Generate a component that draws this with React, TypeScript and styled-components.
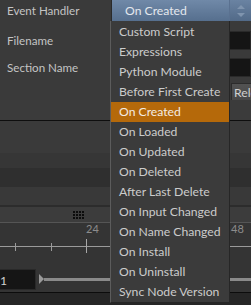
import React from 'react';
import styled, { createGlobalStyle } from 'styled-components';

const events = [
  'Custom Script',
  'Expressions',
  'Python Module',
  'Before First Create',
  'On Created',
  'On Loaded',
  'On Updated',
  'On Deleted',
  'After Last Delete',
  'On Input Changed',
  'On Name Changed',
  'On Install',
  'On Uninstall',
  'Sync Node Version',
];

const selected = 'On Created';

function App() {
  return (
    <StyledPage>
      <GlobalStyle />

      <StyledParms>
        <StyledParmRow>
          <StyledLabel>Event Handler</StyledLabel>
          <StyledCombo>
            <span>{selected}</span>
            <StyledSpinner>
              <svg width="8" height="12" viewBox="0 0 8 12">
                <path d="M4 0 L8 4 L0 4 Z" fill="#7f94ae" />
                <path d="M0 8 L8 8 L4 12 Z" fill="#7f94ae" />
              </svg>
            </StyledSpinner>
          </StyledCombo>
        </StyledParmRow>

        <StyledParmRow $top={10}>
          <StyledLabel>Filename</StyledLabel>
          <StyledField />
        </StyledParmRow>

        <StyledParmRow $top={8}>
          <StyledLabel>Section Name</StyledLabel>
          <StyledField />
        </StyledParmRow>

        <StyledButtonRow>
          <StyledButton>Reload</StyledButton>
        </StyledButtonRow>
      </StyledParms>

      <StyledBand $height={20} $bg="#3b3b3b" />
      <StyledBand $height={1} $bg="#0e0e0e" />
      <StyledBand $height={32} $bg="#3a3a3a" />
      <StyledBand $height={15} $bg="#363636" />
      <StyledBand $height={19} $bg="#2f2f2f" />
      <StyledBand $height={18} $bg="#393939" />
      <StyledBand $height={2} $bg="#2c2c2c" />

      <StyledGripBar>
        <svg width="11" height="8" viewBox="0 0 11 8">
          {[0, 3, 6].map((y) =>
            [0, 3, 6, 9].map((x) => <rect key={`${x}-${y}`} x={x} y={y} width="2" height="2" fill="#0c0c0c" />)
          )}
        </svg>
      </StyledGripBar>

      <StyledTimeline>
        <svg width="251" height="39" viewBox="0 0 251 39">
          <text x="86" y="10" fill="#8c8c8c" fontSize="11" fontFamily="Lato, sans-serif">24</text>
          <text x="231" y="10" fill="#8c8c8c" fontSize="11" fontFamily="Lato, sans-serif">48</text>
          <rect x="0" y="23" width="251" height="1" fill="#9a9a9a" />
          <rect x="15" y="20" width="1" height="8" fill="#9a9a9a" />
          <rect x="51" y="20" width="1" height="8" fill="#9a9a9a" />
          <rect x="86" y="16" width="1" height="14" fill="#a8a8a8" />
        </svg>
      </StyledTimeline>

      <StyledSliderRow>
        <StyledFrameField>1</StyledFrameField>
        <StyledHandle />
        <StyledTrack />
      </StyledSliderRow>

      <StyledBand $height={1} $bg="#0c0c0c" />
      <StyledBottom />

      <StyledMenu>
        {events.map((item) => (
          <StyledMenuItem key={item} $active={item === selected}>
            {item}
          </StyledMenuItem>
        ))}
      </StyledMenu>
    </StyledPage>
  );
}

const GlobalStyle = createGlobalStyle`
  html, body {
    margin: 0;
    padding: 0;
    background: #3a3a3a;
  }
`;

const StyledPage = styled.div`
  position: relative;
  width: 251px;
  height: 305px;
  overflow: hidden;
  background: #3a3a3a;
  font-family: Lato, 'Noto Sans', sans-serif;
  font-size: 12.2px;
  color: #cacaca;
  display: flex;
  flex-direction: column;
`;

const StyledParms = styled.div`
  display: flex;
  flex-direction: column;
  height: 100px;
`;

const StyledParmRow = styled.div<{ $top?: number }>`
  display: flex;
  align-items: center;
  margin-top: ${(p) => p.$top ?? 0}px;
`;

const StyledLabel = styled.div`
  width: 111px;
  flex-shrink: 0;
  padding-left: 7px;
  box-sizing: border-box;
  white-space: nowrap;
  font-size: 11.6px;
  color: #c4c4c4;
`;

const StyledCombo = styled.div`
  flex: 1;
  height: 21px;
  display: flex;
  align-items: center;
  background: linear-gradient(#7089a8, #566f8e);
  border-left: 1px solid #2a2a2a;
  color: #e4e8ee;
  padding-left: 13px;

  > span {
    flex: 1;
  }
`;

const StyledSpinner = styled.div`
  width: 21px;
  height: 21px;
  display: flex;
  align-items: center;
  justify-content: center;
  background: linear-gradient(#6a83a2, #526a88);
  border-left: 1px solid #5a7190;
`;

const StyledField = styled.div`
  flex: 1;
  height: 19px;
  background: #151515;
  border: 1px solid #2a2a2a;
  box-sizing: border-box;
`;

const StyledButtonRow = styled.div`
  display: flex;
  margin-top: 6px;
  padding-left: 231px;
`;

const StyledButton = styled.div`
  flex-shrink: 0;
  width: 50px;
  height: 17px;
  line-height: 17px;
  padding-left: 2px;
  background: linear-gradient(#525252, #474747);
  border: 1px solid #2c2c2c;
  color: #d0d0d0;
`;

const StyledBand = styled.div<{ $height: number; $bg: string }>`
  height: ${(p) => p.$height}px;
  flex-shrink: 0;
  background: ${(p) => p.$bg};
`;

const StyledGripBar = styled.div`
  height: 15px;
  flex-shrink: 0;
  background: #3c3c3c;
  border-bottom: 1px solid #555555;
  display: flex;
  align-items: center;
  padding-left: 73px;
`;

const StyledTimeline = styled.div`
  height: 39px;
  flex-shrink: 0;
  background: #343434;
  display: flex;
`;

const StyledSliderRow = styled.div`
  height: 30px;
  flex-shrink: 0;
  background: #343434;
  display: flex;
  align-items: center;
  padding-top: 4px;
  box-sizing: border-box;
`;

const StyledFrameField = styled.div`
  width: 36px;
  height: 21px;
  line-height: 21px;
  background: #151515;
  border: 1px solid #292929;
  border-left: none;
  box-sizing: border-box;
  color: #d0d0d0;
`;

const StyledHandle = styled.div`
  width: 0;
  height: 0;
  margin-left: 3px;
  border-top: 5px solid transparent;
  border-bottom: 5px solid transparent;
  border-left: 5px solid #9a9a9a;
`;

const StyledTrack = styled.div`
  flex: 1;
  height: 3px;
  background: #8a8a8a;
`;

const StyledBottom = styled.div`
  flex: 1;
  background: #262626;
`;

const StyledMenu = styled.div`
  position: absolute;
  left: 110px;
  top: 21px;
  width: 118px;
  padding-top: 1px;
  background: #3b3b3b;
  border-left: 1px solid #5c5c5c;
  border-right: 1px solid #262626;
  border-bottom: 1px solid #262626;
  display: flex;
  flex-direction: column;
`;

const StyledMenuItem = styled.div<{ $active: boolean }>`
  height: 20px;
  line-height: 20px;
  padding-left: 8px;
  white-space: nowrap;
  background: ${(p) => (p.$active ? '#b5690a' : 'transparent')};
  color: ${(p) => (p.$active ? '#f4ece2' : '#cccccc')};
`;

export default App;
